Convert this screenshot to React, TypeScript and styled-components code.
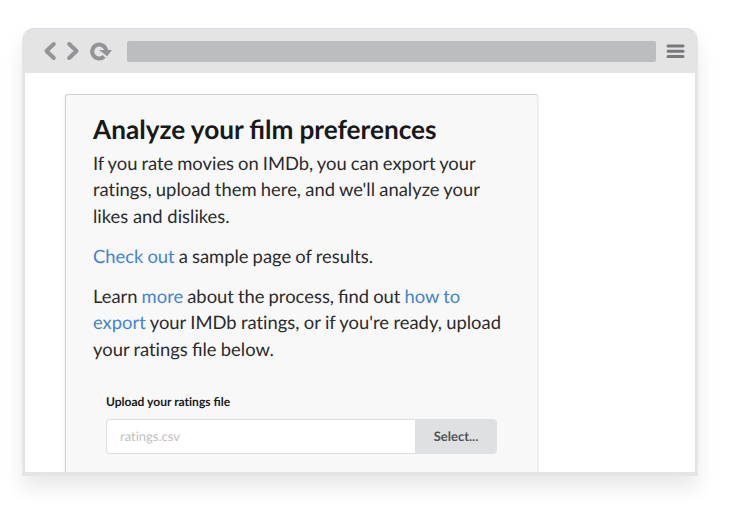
import React from "react";
import styled, { createGlobalStyle } from "styled-components";

const GlobalStyle = createGlobalStyle`
  * { box-sizing: border-box; }
  html, body { margin: 0; background: #fff; }
  body { width: 729px; height: 512px; overflow: hidden; font-family: Lato, sans-serif; text-rendering: geometricPrecision; }
  input, button { text-rendering: inherit; }
`;

const Page = styled.main`
  height: 512px;
  padding: 28px 31px 0 22px;
`;

const BrowserWindow = styled.section`
  display: flex;
  flex-direction: column;
  height: 448px;
  border: 1px solid #e6e6e3;
  border-top-color: #dcdaf3;
  border-radius: 12px 12px 1px 1px;
  background: #e4e4e4;
  padding: 0 2px 3px;
  box-shadow: 0 12px 20px rgba(0, 0, 0, 0.09);
`;

const Toolbar = styled.header`
  display: flex;
  align-items: center;
  flex: 0 0 44px;
  padding: 0 9px 0 18px;
`;

const NavIcons = styled.svg`
  width: 70px;
  height: 22px;
  margin-right: 14px;
`;

const AddressBar = styled.div`
  width: 529px;
  height: 21px;
  border-radius: 2px;
  background: #bbbdbf;
`;

const MenuIcon = styled.svg`
  width: 19px;
  height: 16px;
  margin-left: 10px;
`;

const Viewport = styled.div`
  flex: 1;
  overflow: hidden;
  background: #fff;
  padding: 21px 0 0 40px;
`;

const Card = styled.article`
  width: 473px;
  height: 420px;
  padding: 19px 27px 0 27px;
  border: 1px solid #d2d2d3;
  border-right-color: #e9e9e9;
  border-radius: 3px;
  background: #f8f8f8;
  box-shadow: 0 1px 3px rgba(0, 0, 0, 0.12);
`;

const Title = styled.h1`
  margin: 0 0 6px;
  color: #18191a;
  font-size: 26.2px;
  font-weight: 700;
  line-height: 30px;
  word-spacing: -0.3px;
`;

const Paragraph = styled.p`
  margin: 0 0 14px;
  color: #2a2b2c;
  font-size: 18.4px;
  line-height: 26.25px;
  white-space: nowrap;
`;

const Line = styled.span<{ $gap?: number }>`
  display: block;
  word-spacing: ${({ $gap = 0 }) => $gap}px;
`;

const Plain = styled.span`
  font-variant-ligatures: none;
`;

const Link = styled.a`
  color: #4285ca;
`;

const UploadForm = styled.form`
  margin: 31px 0 0 13px;
`;

const Label = styled.label`
  display: block;
  color: #18191a;
  font-size: 12.05px;
  font-weight: 700;
  line-height: 18px;
`;

const FileField = styled.div`
  display: flex;
  width: 391px;
  height: 35px;
  margin-top: 8px;
`;

const FileInput = styled.input`
  width: 309px;
  padding: 0 13px;
  border: 1px solid #dedfe0;
  border-right: 0;
  border-radius: 4px 0 0 4px;
  background: #fff;
  font: 13px Lato, sans-serif;
  font-variant-ligatures: none;
  &::placeholder { color: #bfbfbf; opacity: 1; }
`;

const SelectButton = styled.button`
  width: 82px;
  padding: 0;
  border: 0;
  border-radius: 0 4px 4px 0;
  background: #dfe0e2;
  color: #505253;
  font: 700 13px Lato, sans-serif;
`;

export default function App() {
  return (
    <>
      <GlobalStyle />
      <Page>
        <BrowserWindow>
          <Toolbar>
            <NavIcons viewBox="0 0 70 22" fill="none">
              <g stroke="#929497" strokeWidth="4" strokeLinecap="round" strokeLinejoin="round">
                <path d="M10.800 4 3.500 11l7.300 7M26.200 4l7.300 7-7.300 7" />
              </g>
              <path d="M61.200 16.500a7 7 0 1 1 2-5.500" stroke="#929497" strokeWidth="4" />
              <path d="M56 10h13l-4.800 6.300Z" fill="#929497" />
            </NavIcons>
            <AddressBar />
            <MenuIcon viewBox="0 0 19 16">
              <path d="M2 3h15M2 8.200h15M2 13.400h15" stroke="#77797d" strokeWidth="3" strokeLinecap="round" />
            </MenuIcon>
          </Toolbar>
          <Viewport>
            <Card>
              <Title>Analyze your film preferences</Title>
              <Paragraph>
                <Line $gap={-0.72}>If you rate movies on IMDb, you can export your</Line>
                <Line $gap={-0.43}><Plain>ratings</Plain>, upload them here, and we'll analyze your</Line>
                <Line>likes and dislikes.</Line>
              </Paragraph>
              <Paragraph>
                <Line $gap={-0.65}><Link>Check out</Link> a sample page of results.</Line>
              </Paragraph>
              <Paragraph>
                <Line $gap={-0.68}>Learn <Link>more</Link> about the process, find out <Link>how to</Link></Line>
                <Line $gap={-0.35}><Link>export</Link> your IMDb <Plain>ratings</Plain>, or if you're ready, upload</Line>
                <Line $gap={-0.5}>your <Plain>ratings</Plain> file below.</Line>
              </Paragraph>
              <UploadForm>
                <Label htmlFor="ratings">Upload your <Plain>ratings</Plain> file</Label>
                <FileField>
                  <FileInput id="ratings" placeholder="ratings.csv" />
                  <SelectButton type="button">Select...</SelectButton>
                </FileField>
              </UploadForm>
            </Card>
          </Viewport>
        </BrowserWindow>
      </Page>
    </>
  );
}
